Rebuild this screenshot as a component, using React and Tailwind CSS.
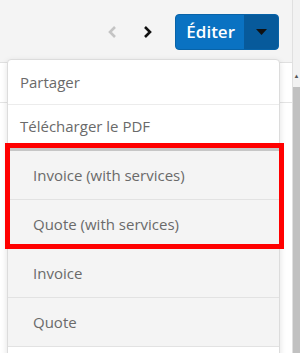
import React from "react";

const font = { fontFamily: '"Open Sans", "Noto Sans", sans-serif' };

function Item({ children }) {
  return (
    <div className="flex items-center h-[49px] pl-[25px] text-[15px] text-[#6a6a6a] border-b border-[#e2e2e2] bg-[#f4f4f4]">
      {children}
    </div>
  );
}

export default function App() {
  return (
    <div className="relative w-[300px] h-[353px] overflow-hidden bg-white" style={font}>
      <div className="flex h-full">
        <div className="flex-1 flex flex-col">
          <div className="h-[63px] bg-[#f4f4f4] border-b border-[#e0e0e0] flex items-center justify-end pr-[13px] pt-[2px]">
            <svg width="12" height="14" viewBox="0 0 12 14" className="mr-[22px]">
              <path d="M8 2 L3 7 L8 12" fill="none" stroke="#c4c4c4" strokeWidth="2.6" />
            </svg>
            <svg width="12" height="14" viewBox="0 0 12 14" className="mr-[22px]">
              <path d="M4 2 L9 7 L4 12" fill="none" stroke="#111" strokeWidth="2.6" />
            </svg>
            <div className="flex h-[36px] rounded-[4px] overflow-hidden bg-[#0a72c2] border border-[#0863a8]">
              <div className="flex items-center pl-[10px] pr-[9px] text-white text-[17px] font-semibold">
                Éditer
              </div>
              <div className="w-[34px] bg-[#075a9b] flex items-center justify-center">
                <svg width="11" height="6" viewBox="0 0 11 6">
                  <path d="M0 0 L11 0 L5.5 6 Z" fill="#111" />
                </svg>
              </div>
            </div>
          </div>
          <div className="flex-1 bg-white">
            <div className="h-[40px] border-b border-[#e4e4e4]" />
          </div>
        </div>
        <div className="w-[8px] flex flex-col border-l border-[#e0e0e0] bg-[#f2f2f2]">
          <div className="h-[65px]" />
          <div className="h-[22px] flex items-center justify-center text-[6px] text-[#555]">▲</div>
          <div className="flex-1 bg-[#c1c1c1]" />
        </div>
      </div>

      <div className="absolute left-[7px] top-[59px] w-[273px] bg-white border border-[#dcdcdc] rounded-[4px] shadow-[0_2px_6px_rgba(0,0,0,0.12)]">
        <div className="h-[45px] flex items-center pl-[12px] text-[15px] text-[#6a6a6a] border-b border-[#ececec]">
          Partager
        </div>
        <div className="h-[43px] flex items-center pl-[12px] text-[15px] text-[#6a6a6a]">
          Télécharger le PDF
        </div>
        <div className="border-t-[3px] border-[#c6c6c6]">
          <Item>Invoice (with services)</Item>
          <Item>Quote (with services)</Item>
          <Item>Invoice</Item>
          <Item>Quote</Item>
          <div className="h-[20px] bg-white" />
        </div>
      </div>

      <div className="absolute left-[5px] top-[143px] w-[279px] h-[106px] border-[5px] border-[#ff0000] pointer-events-none" />
    </div>
  );
}
